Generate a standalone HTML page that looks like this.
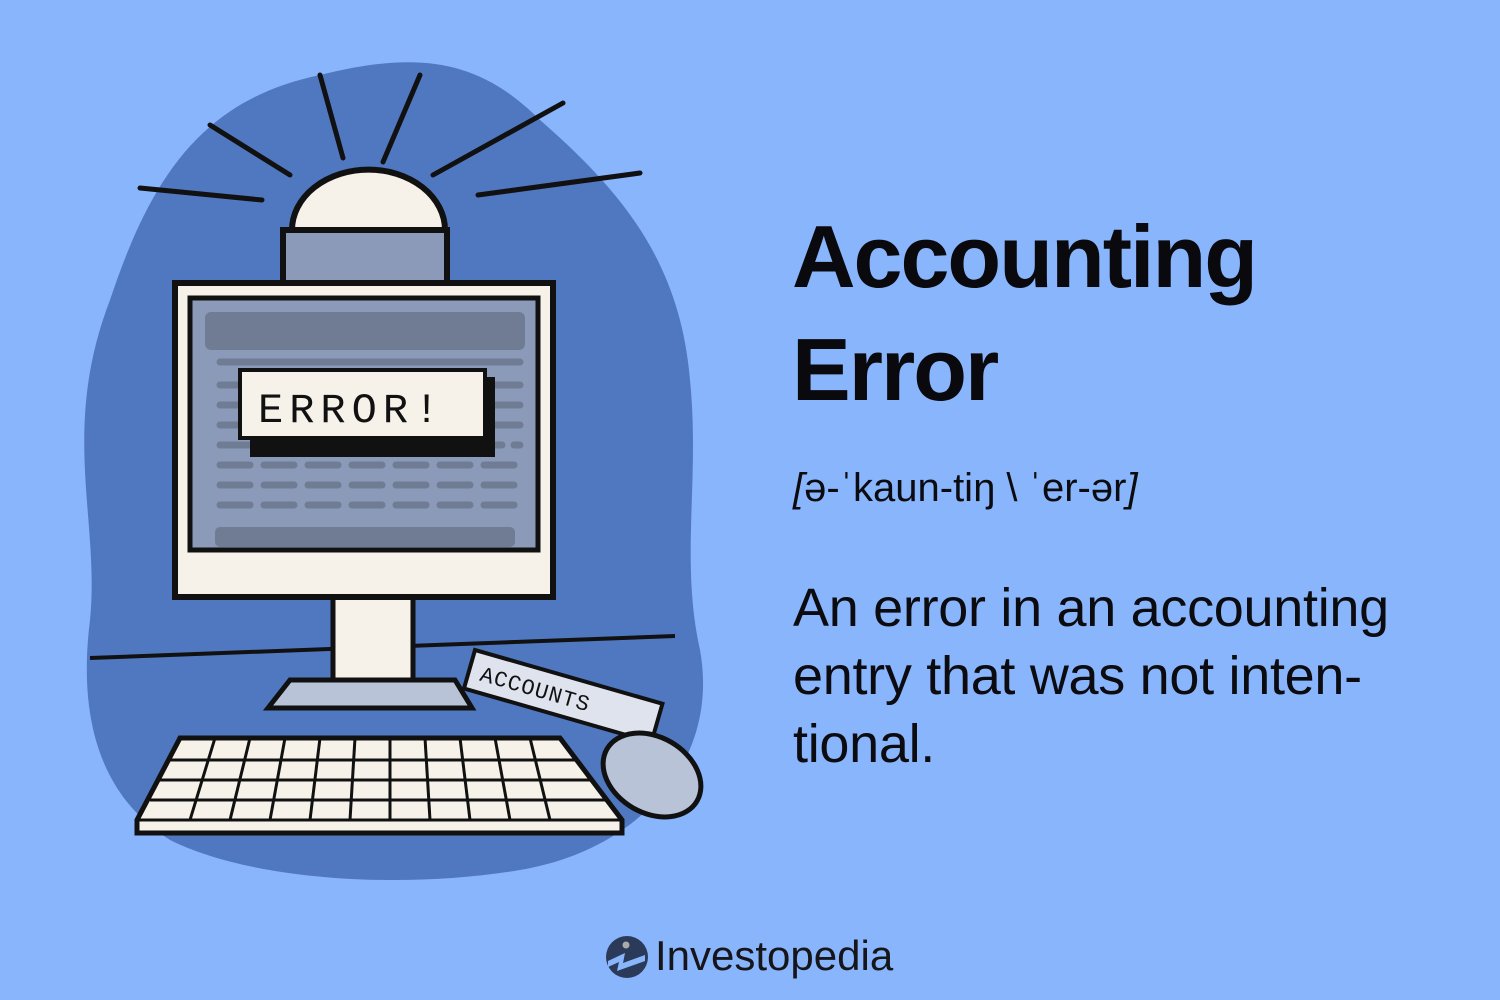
<!DOCTYPE html>
<html><head><meta charset="utf-8"><style>
html,body{margin:0;padding:0;width:1500px;height:1000px;overflow:hidden;background:#89b5fd;font-family:"Liberation Sans",sans-serif}
.t{position:absolute;left:793px;color:#0c0c10}
h1{position:absolute;left:792px;top:200px;margin:0;font-size:88px;line-height:113px;font-weight:bold;color:#0a0a0e;letter-spacing:-2px}
.p{top:466px;font-size:40px}
.b{top:574px;font-size:54px;line-height:68px;letter-spacing:-0.3px}
</style></head><body>
<svg width="760" height="1000" style="position:absolute;left:0;top:0">
<path d="M110 300 C150 180 200 100 320 75 C420 50 480 60 540 120 C620 190 680 260 690 380 C700 480 680 560 700 650 C720 760 640 850 520 870 C400 890 250 880 170 840 C90 790 80 700 90 620 C100 520 60 430 110 300Z" fill="#5078c0"/>
<g stroke="#111" stroke-width="5" stroke-linecap="round">
<line x1="140" y1="188" x2="262" y2="200"/><line x1="210" y1="125" x2="290" y2="175"/><line x1="320" y1="75" x2="343" y2="158"/><line x1="420" y1="75" x2="383" y2="162"/><line x1="563" y1="103" x2="433" y2="175"/><line x1="640" y1="173" x2="478" y2="195"/>
</g>
<line x1="90" y1="658" x2="675" y2="636" stroke="#111" stroke-width="4"/>
<path d="M292 230 A76 60 0 0 1 445 230Z" fill="#f6f2ea" stroke="#111" stroke-width="6"/>
<rect x="283" y="230" width="164" height="55" fill="#8a9ab8" stroke="#111" stroke-width="6"/>
<rect x="333" y="590" width="80" height="92" fill="#f6f2ea" stroke="#111" stroke-width="5"/>
<path d="M268 708 L290 680 L455 680 L472 708Z" fill="#b8c3d8" stroke="#111" stroke-width="5"/>
<rect x="175" y="283" width="378" height="314" fill="#f6f2ea" stroke="#111" stroke-width="6"/>
<rect x="190" y="298" width="348" height="252" fill="#8a9ab8" stroke="#111" stroke-width="5"/>
<rect x="205" y="312" width="320" height="38" rx="6" fill="#6f7c94"/>
<rect x="215" y="527" width="300" height="20" rx="5" fill="#6f7c94"/>
<g stroke="#6f7c94" stroke-width="7" stroke-linecap="round">
<line x1="220" y1="362" x2="520" y2="362"/><line x1="220" y1="385" x2="520" y2="385"/><line x1="220" y1="405" x2="520" y2="405"/><line x1="220" y1="425" x2="520" y2="425"/><line x1="220" y1="445" x2="520" y2="445" stroke-dasharray="30 12"/><line x1="220" y1="465" x2="520" y2="465" stroke-dasharray="30 14"/><line x1="220" y1="485" x2="520" y2="485" stroke-dasharray="30 14"/><line x1="220" y1="505" x2="520" y2="505" stroke-dasharray="30 14"/>
</g>
<rect x="250" y="377" width="245" height="80" fill="#111"/>
<rect x="240" y="370" width="245" height="68" fill="#f6f2ea" stroke="#111" stroke-width="4"/>
<text x="258" y="422" font-family="Liberation Mono,monospace" font-size="42" fill="#111" letter-spacing="6">ERROR!</text>
<g transform="translate(475,650) rotate(16)">
<rect x="0" y="0" width="195" height="40" fill="#dfe3ee" stroke="#111" stroke-width="4"/>
<text x="12" y="28" font-size="22" font-family="Liberation Mono,monospace" fill="#111" letter-spacing="1">ACCOUNTS</text>
</g>
<ellipse cx="652" cy="775" rx="52" ry="38" transform="rotate(30 652 775)" fill="#b8c3d8" stroke="#111" stroke-width="5"/>
<path d="M180 738 L560 738 L622 820 L622 833 L137 833 L137 820Z" fill="#f6f2ea" stroke="#111" stroke-width="5"/>
<g stroke="#111" stroke-width="3">
<line x1="170" y1="760" x2="575" y2="760"/><line x1="160" y1="780" x2="590" y2="780"/><line x1="150" y1="800" x2="605" y2="800"/><line x1="137" y1="820" x2="622" y2="820"/>
</g>
<g stroke="#111" stroke-width="3">
<line x1="215" y1="738" x2="190" y2="820"/><line x1="250" y1="738" x2="230" y2="820"/><line x1="285" y1="738" x2="270" y2="820"/><line x1="320" y1="738" x2="310" y2="820"/><line x1="355" y1="738" x2="350" y2="820"/><line x1="390" y1="738" x2="390" y2="820"/><line x1="425" y1="738" x2="430" y2="820"/><line x1="460" y1="738" x2="470" y2="820"/><line x1="495" y1="738" x2="510" y2="820"/><line x1="530" y1="738" x2="550" y2="820"/>
</g>
</svg>
<h1>Accounting<br>Error</h1>
<div class="t p"><i>[</i>ə-ˈkaun-tiŋ \ ˈer-ər<i>]</i></div>
<div class="t b">An error in an accounting<br>entry that was not inten-<br>tional.</div>
<svg width="44" height="44" style="position:absolute;left:605px;top:935px" viewBox="0 0 44 44">
<circle cx="22" cy="22" r="21" fill="#2a3a58"/><circle cx="21" cy="10" r="3.5" fill="#aaa"/>
<path d="M3 26 L20 18 L18 28 L40 20 L40 26 L12 36 L14 27 L3 32Z" fill="#89b5fd"/>
</svg>
<div style="position:absolute;left:655px;top:932px;font-size:42px;color:#16161a">Investopedia</div>
</body></html>
